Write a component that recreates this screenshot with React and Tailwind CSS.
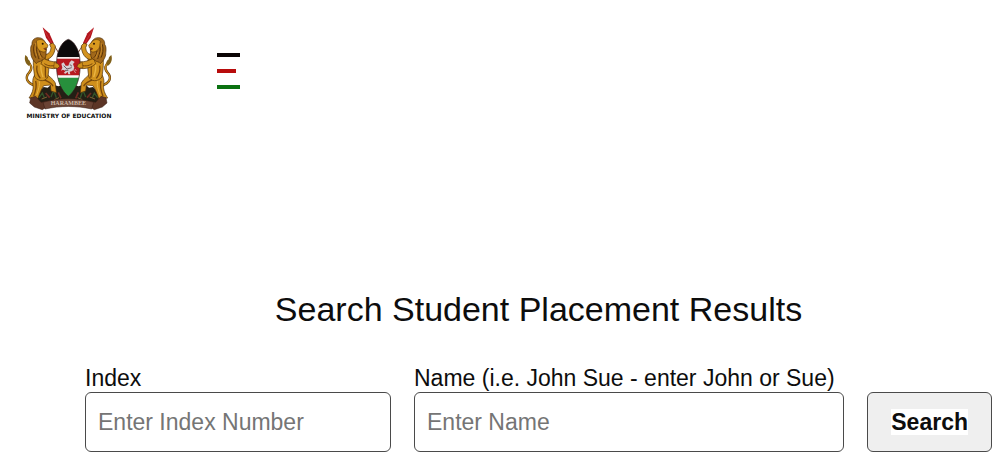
import React, { useState } from "react";

const MENU_BARS = [
  { key: "black", className: "w-[23px] bg-[#0a0505]" },
  { key: "red", className: "w-[19px] bg-[#b80c0c]" },
  { key: "green", className: "w-[23px] bg-[#0b7211]" },
];

// One supporter with its spear; the right hand one is the same shape mirrored
function Lion() {
  return (
    <g>
      {/* spear */}
      <path d="M108 76 L130 112" stroke="#7c4632" strokeWidth="3" />
      <path d="M83 37 L103 55 L116 84 L108 89 L93 68 Z" fill="#b3151d" />
      <path d="M86 42 L110 84" stroke="#d8484f" strokeWidth="1.5" />

      {/* tail */}
      <path
        d="M62 212 C32 204 30 186 43 172 C54 160 48 148 38 140"
        fill="none"
        stroke="#5a3608"
        strokeWidth="7"
        strokeLinecap="round"
      />
      <path
        d="M62 212 C32 204 30 186 43 172 C54 160 48 148 38 140"
        fill="none"
        stroke="#c98c1e"
        strokeWidth="4"
        strokeLinecap="round"
      />
      <path d="M31 120 C27 134 31 146 42 153 C48 146 46 136 39 133 C40 127 36 124 31 120 Z" fill="#806019" />

      {/* hind legs */}
      <path
        d="M60 178 C48 196 56 210 54 222 C52 234 46 242 42 249 L68 252 C74 236 78 224 86 212 L106 210 L108 228 L124 233 L121 204 C114 190 102 186 96 176 Z"
        fill="#cf8f1c"
        stroke="#4f2e08"
        strokeWidth="2"
      />
      <path d="M62 198 C66 212 62 228 56 244 M88 194 C98 200 110 202 114 214" fill="none" stroke="#7a470a" strokeWidth="4" />
      <path d="M72 196 C76 208 70 224 65 240" fill="none" stroke="#eab543" strokeWidth="3" />

      {/* body */}
      <path d="M58 116 C52 140 56 162 59 186 C72 202 94 200 99 184 C102 162 104 142 98 118 Z" fill="#d1921e" stroke="#4f2e08" strokeWidth="2" />
      <path d="M90 150 C94 162 88 174 93 188 M66 152 C63 168 68 180 76 190" fill="none" stroke="#7a470a" strokeWidth="4" />
      <path d="M78 150 C76 164 80 174 84 186" fill="none" stroke="#eab543" strokeWidth="4" />

      {/* forelegs */}
      <path d="M88 118 C100 120 107 110 108 98 L104 88 L113 84 L121 92 C121 114 110 132 92 134 Z" fill="#d3931f" stroke="#4f2e08" strokeWidth="2" />
      <path d="M84 130 C98 136 112 142 124 140 L134 148 L132 158 L116 161 C100 160 88 156 78 146 Z" fill="#d3931f" stroke="#4f2e08" strokeWidth="2" />
      <path d="M88 146 C100 154 112 154 126 150" fill="none" stroke="#7a470a" strokeWidth="3" />

      {/* mane */}
      <path
        d="M70 68 C58 68 50 76 51 88 C44 98 48 110 48 120 C50 130 56 138 64 146 C68 138 76 142 80 136 C88 132 94 128 93 116 L95 92 C90 76 82 68 70 68 Z"
        fill="#a1681a"
        stroke="#4f2e08"
        strokeWidth="2"
      />
      <path d="M58 88 C54 104 56 116 62 128 M66 94 C62 108 68 120 72 132 M74 108 C74 118 80 124 84 128" fill="none" stroke="#593207" strokeWidth="3" />
      <path d="M62 84 C58 98 60 110 66 124 M71 110 L78 130" fill="none" stroke="#d9992f" strokeWidth="2" />

      {/* face */}
      <path d="M64 78 C74 70 86 74 91 83 L99 90 L97 98 L89 99 L94 105 L89 111 C78 112 68 104 66 94 Z" fill="#d9991f" stroke="#4f2e08" strokeWidth="1.5" />
      <circle cx="83" cy="86" r="3" fill="#2f1804" />
      <path d="M86 101 L94 104" stroke="#6d180f" strokeWidth="3" />
    </g>
  );
}

function CoatOfArms() {
  return (
    <svg viewBox="24 30 276 258" className="h-[86px] w-[92px]" role="img" aria-label="Coat of arms">
      {/* mountain and plants */}
      <path
        d="M48 254 L60 234 L76 226 L86 216 L98 218 L110 208 L130 214 L160 204 L190 214 L210 208 L222 218 L234 216 L244 226 L260 234 L272 254 L240 266 L80 266 Z"
        fill="#231f15"
      />
      <path d="M72 248 L82 234 L88 248 M108 246 L116 226 L124 248 M196 248 L204 226 L212 246 M232 248 L238 234 L248 248" fill="none" stroke="#32552a" strokeWidth="4" />
      <path d="M92 234 L104 248 M130 232 L138 250 M190 232 L182 250 M228 234 L216 248" stroke="#6f2a22" strokeWidth="5" />
      <path d="M80 252 L96 246 M224 246 L240 252 M118 254 L132 248 M188 248 L202 254" stroke="#7d6034" strokeWidth="3" />

      <Lion />
      <g transform="translate(320 0) scale(-1 1)">
        <Lion />
      </g>

      {/* shield */}
      <clipPath id="shield">
        <path d="M160 73 C176 78 190 100 194 126 C198 160 194 188 184 212 C178 226 168 238 160 244 C152 238 142 226 136 212 C126 188 122 160 126 126 C130 100 144 78 160 73 Z" />
      </clipPath>
      <g clipPath="url(#shield)">
        <path d="M120 70 H200 V130 H120 Z" fill="#0c0a0b" />
        <path d="M120 126 H200 V134 H120 Z" fill="#f4eeee" />
        <path d="M120 131 H200 V183 H120 Z" fill="#b8181f" />
        <path d="M120 181 H200 V190 H120 Z" fill="#f8f6f4" />
        <path d="M120 188 H200 V246 H120 Z" fill="#27903c" />
      </g>
      <path
        d="M160 73 C176 78 190 100 194 126 C198 160 194 188 184 212 C178 226 168 238 160 244 C152 238 142 226 136 212 C126 188 122 160 126 126 C130 100 144 78 160 73 Z"
        fill="none"
        stroke="#32191a"
        strokeWidth="2"
      />

      {/* paws over the shield edge */}
      <path d="M118 142 L130 147 L134 154 L128 160 L116 158 Z M202 142 L190 147 L186 154 L192 160 L204 158 Z" fill="#cf8f1c" stroke="#4f2e08" strokeWidth="1.5" />

      {/* rooster with axe */}
      <path
        d="M139 146 L146 142 L152 152 L160 152 L164 142 L170 136 L179 141 L174 147 L178 158 L172 168 L164 170 L166 178 L160 178 L158 170 L152 176 L146 174 L152 168 L144 164 L138 167 L142 158 Z"
        fill="#d9cfd3"
      />
      <path d="M146 152 L156 162 L170 158 M164 148 L171 154 M150 166 L160 166" fill="none" stroke="#54454c" strokeWidth="2.5" />
      <path d="M174 162 L182 174 M180 162 L184 168" stroke="#d9cfd3" strokeWidth="2" />

      {/* ribbon */}
      <path d="M47 248 L62 244 L78 262 L100 258 L100 272 L82 284 L58 276 L44 264 Z" fill="#5c3526" stroke="#341a12" strokeWidth="1.5" />
      <path d="M273 248 L258 244 L242 262 L220 258 L220 272 L238 284 L262 276 L276 264 Z" fill="#5c3526" stroke="#341a12" strokeWidth="1.5" />
      <path d="M84 262 C132 248 188 248 236 262 L230 282 C184 272 136 272 90 282 Z" fill="#6a4334" stroke="#341a12" strokeWidth="1.5" />
      <text x="160" y="271" textAnchor="middle" fontFamily="Liberation Serif, serif" fontWeight="700" fontSize="18" fill="#cdb9a6">
        HARAMBEE
      </text>
    </svg>
  );
}

function Field({ id, label, placeholder, value, onChange, className }) {
  return (
    <div className={`flex flex-col ${className}`}>
      <label htmlFor={id} className="whitespace-nowrap leading-[27px]">
        {label}
      </label>
      <input
        id={id}
        type="text"
        value={value}
        placeholder={placeholder}
        onChange={(e) => onChange(e.target.value)}
        className="h-[60px] w-full rounded-md border border-[#4a4a4a] bg-white px-3 placeholder:text-[#757575]"
      />
    </div>
  );
}

export default function App() {
  const [index, setIndex] = useState("");
  const [name, setName] = useState("");

  return (
    <div className="bg-white font-['Liberation_Sans',Arial,sans-serif] text-[23px] text-[#0d0d0d]">
      <header className="flex items-start px-[23px] pt-[25px]">
        <a href="#" className="flex w-[92px] flex-col items-center">
          <CoatOfArms />
          <span className="whitespace-nowrap font-['DejaVu_Sans',sans-serif] text-[6px] leading-[10px] font-bold">
            MINISTRY OF EDUCATION
          </span>
        </a>

        <button type="button" aria-label="Menu" className="mt-7 ml-[102px] flex flex-col gap-3">
          {MENU_BARS.map((bar) => (
            <span key={bar.key} className={`h-1 ${bar.className}`} />
          ))}
        </button>
      </header>

      <main className="mt-[168px] pr-2 pl-[85px]">
        <h1 className="text-center text-[34px] leading-10">Search Student Placement Results</h1>

        <form className="mt-9 flex items-end gap-[23px]" onSubmit={(e) => e.preventDefault()}>
          <Field
            id="index"
            label="Index"
            placeholder="Enter Index Number"
            value={index}
            onChange={setIndex}
            className="w-[306px] shrink-0"
          />
          <Field
            id="name"
            label="Name (i.e. John Sue - enter John or Sue)"
            placeholder="Enter Name"
            value={name}
            onChange={setName}
            className="min-w-0 flex-1"
          />
          <button type="submit" className="h-[60px] rounded-md border border-[#4a4a4a] bg-[#efefef] px-[23px] font-bold">
            <span className="bg-white">Search</span>
          </button>
        </form>
      </main>
    </div>
  );
}
